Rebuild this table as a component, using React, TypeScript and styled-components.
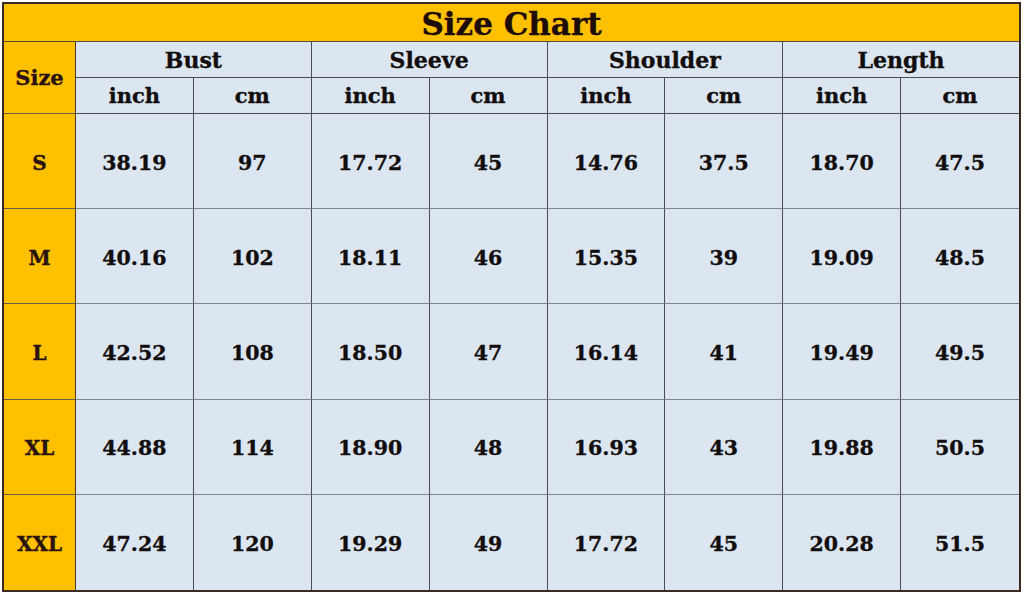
import { Fragment } from 'react'
import styled, { createGlobalStyle } from 'styled-components'

const GlobalStyle = createGlobalStyle`
  html, body {
    margin: 0;
    padding: 0;
    background: #ffffff;
  }
`

const groups = ['Bust', 'Sleeve', 'Shoulder', 'Length']

const rows = [
  { size: 'S', values: ['38.19', '97', '17.72', '45', '14.76', '37.5', '18.70', '47.5'] },
  { size: 'M', values: ['40.16', '102', '18.11', '46', '15.35', '39', '19.09', '48.5'] },
  { size: 'L', values: ['42.52', '108', '18.50', '47', '16.14', '41', '19.49', '49.5'] },
  { size: 'XL', values: ['44.88', '114', '18.90', '48', '16.93', '43', '19.88', '50.5'] },
  { size: 'XXL', values: ['47.24', '120', '19.29', '49', '17.72', '45', '20.28', '51.5'] },
]

function App() {
  return (
    <>
      <GlobalStyle />
      <Chart>
        <Title>Size Chart</Title>
        <Grid>
          <SizeHead>Size</SizeHead>
          {groups.map((g, i) => (
            <GroupHead key={g} $edge={i === groups.length - 1}>
              {g}
            </GroupHead>
          ))}
          {groups.map((g, i) => (
            <Fragment key={g}>
              <UnitHead>inch</UnitHead>
              <UnitHead $edge={i === groups.length - 1}>cm</UnitHead>
            </Fragment>
          ))}
          {rows.map((r, i) => (
            <Fragment key={r.size}>
              <SizeCell $last={i === rows.length - 1}>{r.size}</SizeCell>
              {r.values.map((v, j) => (
                <ValueCell key={j} $last={i === rows.length - 1} $edge={j === r.values.length - 1}>
                  {v}
                </ValueCell>
              ))}
            </Fragment>
          ))}
        </Grid>
      </Chart>
    </>
  )
}

const Chart = styled.div`
  margin: 2px 0 0 2px;
  width: 1019px;
  height: 590px;
  box-sizing: border-box;
  border: 2px solid #3a2a22;
  display: flex;
  flex-direction: column;
  font-family: 'DejaVu Serif', 'Liberation Serif', serif;
  font-weight: 700;
  color: #120e0e;
  -webkit-text-stroke: 0.35px currentColor;
`

const Title = styled.div`
  height: 38px;
  flex: none;
  background: #ffc000;
  border-bottom: 1px solid #5a4a3a;
  display: flex;
  align-items: center;
  justify-content: center;
  padding-top: 3px;
  box-sizing: border-box;
  font-size: 31px;
  color: #1e0c08;
`

const Grid = styled.div`
  flex: 1;
  display: grid;
  grid-template-columns: 72px repeat(8, 1fr);
  grid-template-rows: 36px 36px repeat(5, 1fr);
  background: #dce6f1;
`

const Cell = styled.div<{ $edge?: boolean }>`
  display: flex;
  align-items: center;
  justify-content: center;
  box-sizing: border-box;
  border-right: ${(p) => (p.$edge ? 'none' : '1px solid #4a4f56')};
`

const SizeHead = styled(Cell)`
  grid-row: span 2;
  background: #ffc000;
  border-right: 1px solid #4a3a2a;
  border-bottom: 1px solid #6a5a40;
  font-size: 21px;
  color: #2a130c;
`

const GroupHead = styled(Cell)`
  grid-column: span 2;
  font-size: 22px;
  border-bottom: 1px solid #4a4f56;
`

const UnitHead = styled(Cell)`
  font-size: 21px;
  border-bottom: 1px solid #4a4f56;
`

const SizeCell = styled(Cell)<{ $last: boolean }>`
  background: #ffc000;
  border-right: 1px solid #4a3a2a;
  border-bottom: ${(p) => (p.$last ? 'none' : '1px solid #6a5f50')};
  padding-top: 3px;
  font-size: 20px;
  color: #2a130c;
`

const ValueCell = styled(Cell)<{ $last: boolean }>`
  font-size: 20.5px;
  padding-top: 3px;
  border-bottom: ${(p) => (p.$last ? 'none' : '1px solid #7d8792')};
`

export default App
